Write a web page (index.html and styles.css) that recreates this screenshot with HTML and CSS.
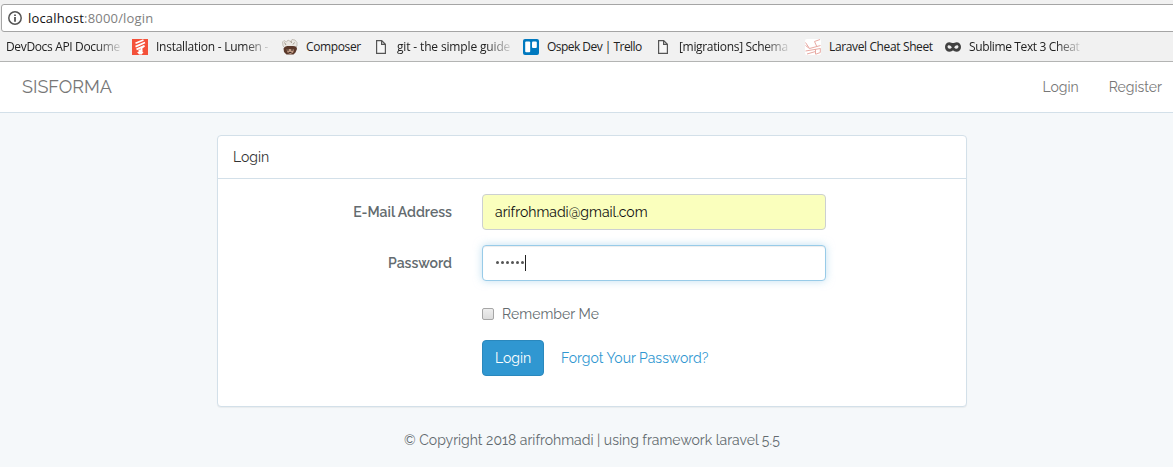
FILE: index.html
```html
<!DOCTYPE html>
<html lang="en">
<head>
<meta charset="utf-8">
<title>SISFORMA</title>
<link rel="stylesheet" href="styles.css">
</head>
<body>
<header class="browser">
  <div class="address">
    <svg class="info" width="14" height="14" viewBox="0 0 14 14"><circle cx="7" cy="7" r="6.2" fill="none" stroke="#555" stroke-width="1.5"/><path d="M6.1 3.4h1.8v1.7H6.1zM6.1 6.1h1.8v4.6H6.1z" fill="#555"/></svg>
    <span class="url"><b>localhost</b>:8000/login</span>
  </div>
  <nav class="bookmarks">
    <a class="mark m1"><span class="label fade">DevDocs API Docume</span></a>
    <a class="mark m2"><svg width="16" height="16" viewBox="0 0 16 16"><path fill="#f4513a" d="M0 0h16v16H0z"/><path d="M3.5 4.300 11.500 1M3.500 7.600 13 3.500M4.500 10.400l8-3.600L9.500 9v4" fill="none" stroke="#fff" stroke-width="1.700"/><path d="M6.500 10.500h3.800v3H6.500z" fill="#fff"/><path d="M5 13h6.500l-1.700 2.600H7z" fill="#fff"/></svg><span class="label fade">Installation - Lumen -</span></a>
    <a class="mark m3"><svg width="16" height="16" viewBox="0 0 16 16"><path d="M.5 3 2 1.500 4.500 3 6 1l2.500 1.500L10 .5l3 .5 2 2.500V7l-2 2-5-1-5 1L1 7z" fill="#eae7e2" stroke="#aaa197" stroke-width=".6"/><path d="M2.500 3.500 4 6M12.500 3.500 11 5.500M9 2l.5 2" stroke="#8d8174" stroke-width=".8"/><path d="M1.500 9.500Q3 6.500 6 7h5q4 0 4 3l-1.500 3.500-2 2h-7L2 13z" fill="#5a382a"/><path d="m4.500 10.500 3-.6 4.500.6-.8 3-2.700 1.600-2.800-1.300z" fill="#c79f88"/><path d="M5 11h2M9 11h2.200M6.500 13.400h3" stroke="#342620"/></svg><span class="label">Composer</span></a>
    <a class="mark m4"><svg width="16" height="16" viewBox="0 0 16 16"><path d="M3.600 1.600h5.100l3.700 3.700v9.100H3.600zM8.600 1.600v3.800h3.800" fill="#f7f7f7" stroke="#555" stroke-width="1.200"/></svg><span class="label fade">git - the simple guide</span></a>
    <a class="mark m5"><svg width="16" height="16" viewBox="0 0 16 16"><rect width="16" height="16" rx="2" fill="#0079bf"/><rect x="2.200" y="2.500" width="5" height="10.800" rx="1" fill="#fff"/><rect x="9" y="2.500" width="4.800" height="6.500" rx="1" fill="#fff"/></svg><span class="label">Ospek Dev | Trello</span></a>
    <a class="mark m6"><svg width="16" height="16" viewBox="0 0 16 16"><path d="M3.600 1.600h5.100l3.700 3.700v9.100H3.600zM8.600 1.600v3.800h3.800" fill="#f7f7f7" stroke="#555" stroke-width="1.200"/></svg><span class="label fade">[migrations] Schema</span></a>
    <a class="mark m7"><svg width="16" height="16" viewBox="0 0 16 16"><rect width="16" height="16" rx="2" fill="#fff"/><path d="M.5 3.500 4.500 9.500 15.500 6.500M.5 6.500 4.500 9.500M9.500 2.500 12 8M9.500 2.500l5.500-2M.5 12l15-2.500M10.500 10v5M2 15l8.500-2.500M15.300 9.500v4L10.500 15.300" fill="none" stroke="#e8aaa4"/></svg><span class="label">Laravel Cheat Sheet</span></a>
    <a class="mark m8"><svg width="16" height="16" viewBox="0 0 16 16"><path d="M4.500 3.200c1.400 0 2.300.8 3.500.8s2.100-.8 3.500-.8C14 3.200 16 5 16 8s-2 4.800-4.500 4.800C9.700 12.800 9 11.500 8 11.500s-1.700 1.300-3.500 1.300C2 12.800 0 11 0 8s2-4.800 4.500-4.800z" fill="#414141"/><path d="M2.500 7.500c.5-2 3-1.700 4.300.7-.8 2-4 2.200-4.300-.7zM13.500 7.500c-.5-2-3-1.700-4.300.7.8 2 4 2.200 4.300-.7z" fill="#eee"/></svg><span class="label fade">Sublime Text 3 Cheat</span></a>
  </nav>
</header>
<nav class="navbar">
  <a class="brand">SISFORMA</a>
  <div class="links"><a>Login</a><a>Register</a></div>
</nav>
<main class="panel">
  <h1 class="heading">Login</h1>
  <form class="form">
    <label class="caption">E-Mail Address</label>
    <div class="field filled"><span class="email">arifrohmadi@gmail.com</span></div>
    <label class="caption">Password</label>
    <div class="field focused"><span class="dots"><i></i><i></i><i></i><i></i><i></i><i></i></span><span class="caret"></span></div>
    <div class="remember"><span class="checkbox"></span><span>Remember Me</span></div>
    <div class="actions"><a class="button">Login</a><a class="forgot">Forgot Your Password?</a></div>
  </form>
</main>
<footer class="footer">© Copyright 2018 arifrohmadi | using framework laravel 5.5</footer>
</body>
</html>
```
FILE: styles.css
```css
* { box-sizing: border-box; }
body { margin: 0; height: 467px; overflow: hidden; background: #f5f8fa; color: #636b6f; font: 14px/22px Raleway, Lato, sans-serif; }
.browser { height: 62px; padding-top: 4px; background: #f1f1f1; border-bottom: 1px solid #b3b4b3; font-family: "Segoe UI", "Open Sans", sans-serif; }
.address { height: 28px; margin: 0 -4px 0 1px; padding: 0 6px; display: flex; align-items: center; gap: 6px; background: #fff; border: 1px solid #a5a5a5; border-radius: 3px; }
.url { font-size: 13px; line-height: 20px; letter-spacing: .18px; color: #808080; white-space: nowrap; }
.url b { font-weight: 400; color: #111; }
.bookmarks { display: flex; height: 29px; padding: 1px 0 0 6px; color: #222; }
.mark { display: flex; flex: none; align-items: center; gap: 8px; font-size: 12px; line-height: 18px; }
.mark svg { flex: none; }
.label { white-space: nowrap; letter-spacing: -.3px; }
.fade { -webkit-mask-image: linear-gradient(90deg, #000 calc(100% - 24px), rgba(0,0,0,.15)); mask-image: linear-gradient(90deg, #000 calc(100% - 24px), rgba(0,0,0,.15)); }
.m1 { width: 126px; }
.m1 .label { letter-spacing: -.35px; }
.m2 { width: 150px; }
.m2 .label { letter-spacing: -.26px; }
.m3 { width: 91px; }
.m3 .label { letter-spacing: -.38px; }
.m4 { width: 150px; }
.m4 .label { letter-spacing: -.15px; }
.m5 { width: 132px; }
.m5 .label { letter-spacing: -.53px; }
.m6 { width: 150px; }
.m6 .label { letter-spacing: -.33px; }
.m7 { width: 140px; }
.m7 .label { letter-spacing: -.37px; }
.m8 { width: 136px; }
.m8 .label { letter-spacing: -.37px; }
.navbar { height: 51px; padding: 0 11px 0 22px; display: flex; align-items: center; justify-content: space-between; background: #fff; border-bottom: 1px solid #d3e0e9; color: #777; }
.brand { font-size: 18px; }
.links { display: flex; gap: 30px; }
.panel { width: 750px; height: 272px; margin: 22px 0 0 217px; background: #fff; border: 1px solid #d3e0e9; border-radius: 4px; box-shadow: 0 1px 1px rgba(0,0,0,.05); }
.heading { height: 43px; margin: 0; padding: 10px 15px; border-bottom: 1px solid #d3e0e9; color: #333; font-size: 14px; font-weight: 400; line-height: 22px; }
.form { padding-top: 15px; display: grid; grid-template-columns: 234px 344px; grid-template-rows: 36px 36px 36px 36px; column-gap: 30px; row-gap: 15px; align-items: center; }
.caption { justify-self: end; font-weight: 600; }
.field { height: 36px; padding: 0 12px; display: flex; align-items: center; border: 1px solid #ccd0d2; border-radius: 4px; color: #111; }
.filled { background: #faffbd; }
.focused { background: #fff; border-color: #98cbe8; box-shadow: inset 0 1px 1px rgba(0,0,0,.075), 0 0 8px rgba(152,203,232,.6); }
.dots { display: flex; gap: 2px; padding: 0 1px 1px 1px; }
.dots i { width: 3px; height: 3px; border-radius: 50%; background: #555; }
.caret { width: 1px; height: 16px; background: #222; }
.remember { grid-column: 2; display: flex; align-items: center; gap: 8px; letter-spacing: .05px; }
.checkbox { width: 12px; height: 12px; border: 1px solid #a6a6a6; border-radius: 2px; background: linear-gradient(#eee, #dcdcdc); }
.actions { grid-column: 2; height: 36px; margin-top: -14px; display: flex; align-items: center; gap: 17px; }
.button { width: 62px; height: 36px; display: flex; align-items: center; justify-content: center; background: #3097d1; border: 1px solid #2a88bd; border-radius: 4px; color: #fff; }
.forgot { color: #3097d1; }
.footer { margin-top: 22px; padding-left: 404px; white-space: nowrap; }
```
